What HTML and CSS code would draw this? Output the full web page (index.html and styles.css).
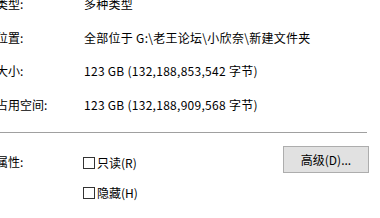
FILE: index.html
```html
<!DOCTYPE html>
<html lang="zh-CN">
<head>
<meta charset="utf-8">
<link rel="stylesheet" href="styles.css">
</head>
<body>
<div class="info">
  <div class="label">类型:</div><div class="value">多种类型</div>
  <div class="label">位置:</div><div class="value">全部位于 G:\老王论坛\小欣奈\新建文件夹</div>
  <div class="label">大小:</div><div class="value">123 GB (132,188,853,542 字节)</div>
  <div class="label">占用空间:</div><div class="value">123 GB (132,188,909,568 字节)</div>
</div>
<div class="separator"></div>
<div class="attrs">
  <div class="label attr-label">属性:</div>
  <div class="checks">
    <label class="check"><span class="box"></span><span>只读(R)</span></label>
    <label class="check"><span class="box"></span><span>隐藏(H)</span></label>
  </div>
  <div class="btn">高级(D)...</div>
</div>
</body>
</html>
```
FILE: styles.css
```css
html, body {
  margin: 0;
  padding: 0;
  background: #ffffff;
}
body {
  font-family: "Noto Sans CJK SC", sans-serif;
  font-size: 12px;
  color: #000000;
  overflow: hidden;
  width: 380px;
  height: 218px;
}
.info {
  display: grid;
  grid-template-columns: 84px 1fr;
  row-gap: 17.5px;
  margin-top: -4px;
}
.label {
  margin-left: -4px;
  line-height: 16px;
  white-space: nowrap;
}
.value {
  line-height: 16px;
  white-space: nowrap;
  letter-spacing: 0.28px;
}
.separator {
  height: 1px;
  background: #a0a0a0;
  width: 367px;
  margin-top: 19px;
}
.attrs {
  display: flex;
  align-items: flex-start;
  margin-top: 13px;
}
.attr-label {
  width: 87px;
  margin-top: 8px;
  flex-shrink: 0;
}
.checks {
  display: flex;
  flex-direction: column;
  gap: 14px;
  width: 201px;
  margin-top: 9px;
}
.check {
  display: flex;
  align-items: center;
  gap: 2px;
  line-height: 16px;
}
.box {
  width: 10px;
  height: 10px;
  border: 1px solid #333333;
  background: #ffffff;
}
.btn {
  width: 84px;
  height: 25px;
  margin-left: -1px;
  border: 1px solid #adadad;
  background: #e1e1e1;
  display: flex;
  align-items: center;
  justify-content: center;
}
```
